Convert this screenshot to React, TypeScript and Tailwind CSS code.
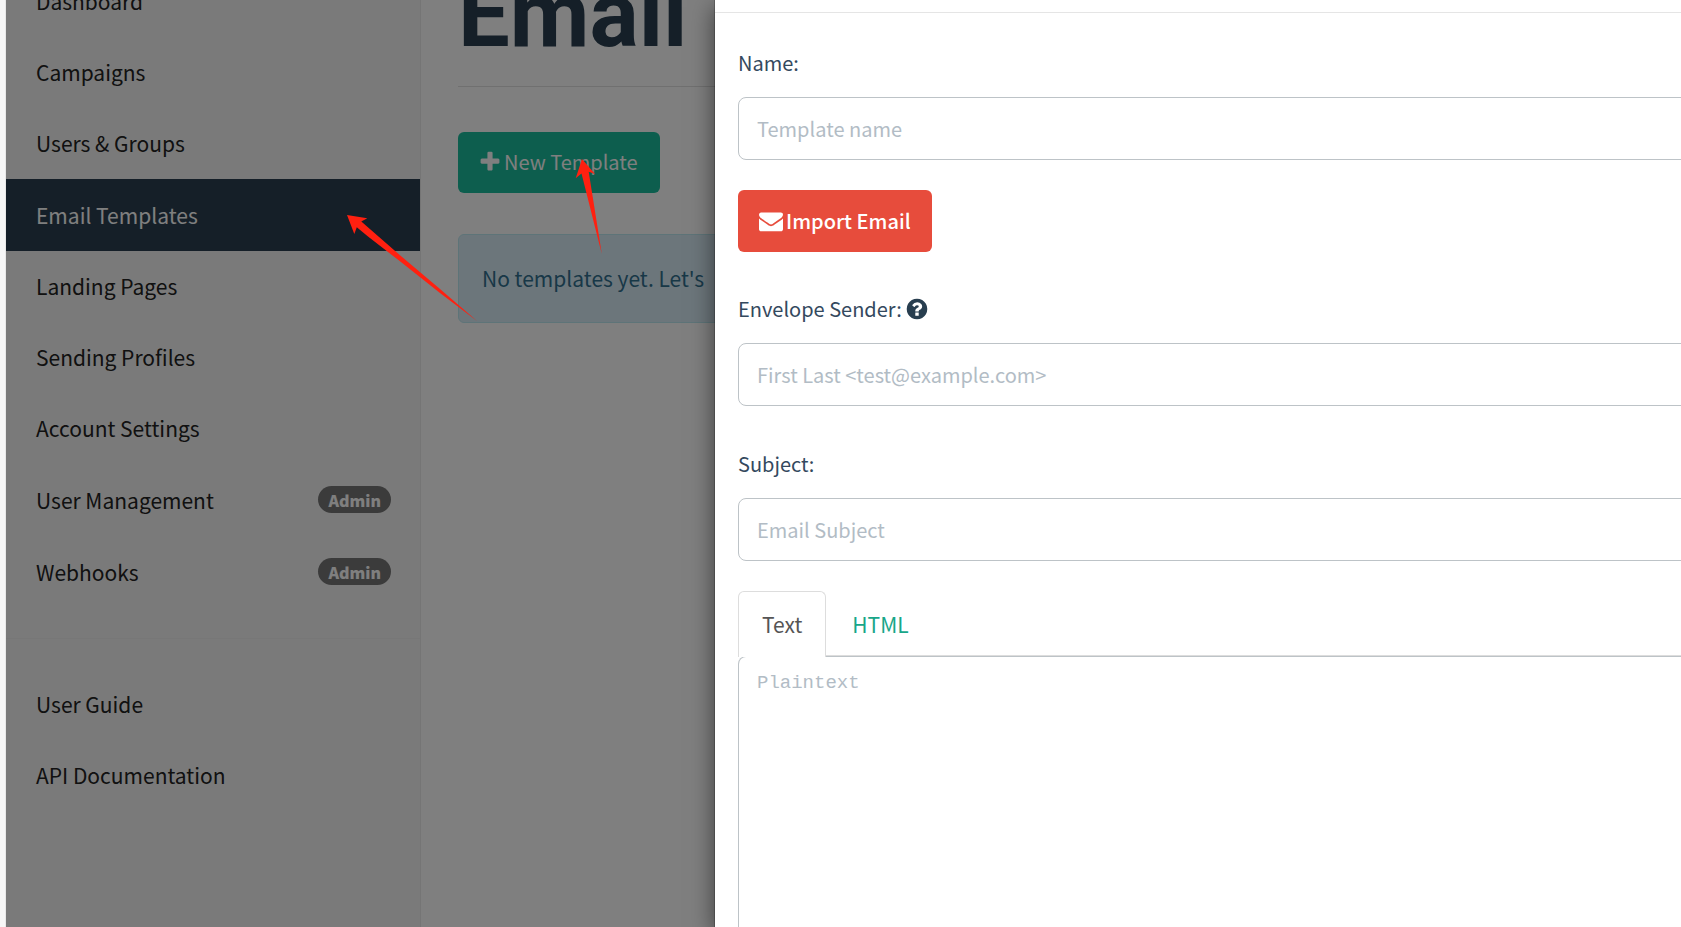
import { useState } from "react";

type NavItem = { label: string; admin?: boolean; active?: boolean };

const mainNav: NavItem[] = [
  { label: "Dashboard" },
  { label: "Campaigns" },
  { label: "Users & Groups" },
  { label: "Email Templates", active: true },
  { label: "Landing Pages" },
  { label: "Sending Profiles" },
  { label: "Account Settings" },
  { label: "User Management", admin: true },
  { label: "Webhooks", admin: true },
];

const helpNav: NavItem[] = [{ label: "User Guide" }, { label: "API Documentation" }];

const PLUS =
  "M1600 736v192q0 40-28 68t-68 28h-416v416q0 40-28 68t-68 28h-192q-40 0-68-28t-28-68v-416h-416q-40 0-68-28t-28-68v-192q0-40 28-68t68-28h416v-416q0-40 28-68t68-28h192q40 0 68 28t28 68v416h416q40 0 68 28t28 68z";
const ENVELOPE =
  "M1792 710v794q0 66-47 113t-113 47h-1472q-66 0-113-47t-47-113v-794q44 49 101 87 362 246 497 345 57 42 92.5 65.5t94.5 48 110 24.5h2q51 0 110-24.5t94.5-48 92.5-65.5q170-123 498-345 57-39 100-87zm0-294q0 79-49 151t-122 123q-376 261-468 325-10 7-42.5 31t-54 38.5-52 32.5-57.5 27-50 9h-2q-23 0-50-9t-57.5-27-52-32.5-54-38.5-42.5-31q-91-64-262-182.5t-205-142.5q-62-42-117-115.5t-55-136.5q0-78 41.5-130t118.5-52h1472q65 0 112.5 47t47.5 113z";
const QUESTION =
  "M1024 1376v-192q0-14-9-23t-23-9h-192q-14 0-23 9t-9 23v192q0 14 9 23t23 9h192q14 0 23-9t9-23zm256-672q0-88-55.5-163t-138.5-116-170-41q-243 0-371 213-15 24 8 42l132 100q7 6 19 6 16 0 25-12 53-68 86-92 34-24 86-24 48 0 85.5 26t37.5 59q0 38-20 61t-68 45q-63 28-115.5 86.5t-52.5 125.5v36q0 14 9 23t23 9h192q14 0 23-9t9-23q0-19 21.5-49.5t54.5-49.5q32-18 49-28.5t46-35 44.5-48 28-60.5 12.5-81zm384 192q0 209-103 385.5t-279.5 279.5-385.5 103-385.5-103-279.5-279.5-103-385.5 103-385.5 279.5-279.5 385.5-103 385.5 103 279.5 279.5 103 385.5z";

function Icon({ d, className }: { d: string; className: string }) {
  return (
    <svg viewBox="0 0 1792 1792" fill="currentColor" aria-hidden="true" className={className}>
      <path d={d} />
    </svg>
  );
}

function NavLink({ item }: { item: NavItem }) {
  const tone = item.active ? "bg-[#2a3f50] text-white" : "text-[#222222]";
  const height = item.active || item.admin ? "h-[72px]" : "h-[71px]";
  return (
    <li>
      <a href="#" className={`flex items-center justify-between pr-[29px] pb-px pl-[30px] ${height} ${tone}`}>
        {item.label}
        {item.admin && (
          <span className="flex h-[27px] items-center rounded-full bg-[#777777] px-[10px] text-[16px] leading-none font-black text-white">
            Admin
          </span>
        )}
      </a>
    </li>
  );
}

function Field({ id, label, placeholder, help }: { id: string; label: string; placeholder: string; help?: boolean }) {
  return (
    <div className="flex flex-col">
      <label htmlFor={id} className="flex h-8 items-center gap-[3px] text-[#34495e]">
        {label}
        {help && <Icon d={QUESTION} className="size-6 text-[#283e4f]" />}
      </label>
      <input
        id={id}
        type="text"
        placeholder={placeholder}
        className="mt-[18px] h-[63px] w-full rounded-lg border border-[#bdc3c7] bg-white px-[18px] text-[#34495e] outline-none placeholder:text-[#b2bcc5]"
      />
    </div>
  );
}

export default function App() {
  const [tab, setTab] = useState<"text" | "html">("text");
  const tabOn =
    "relative z-10 h-[66px] rounded-t-md border border-b-0 border-[#dddddd] bg-white px-[23px] pb-[2px] text-[#555555]";
  const tabOff = "h-[64px] rounded-t-md border border-b-0 border-transparent px-[23px] text-[#18a689]";

  return (
    <div className="relative flex h-screen overflow-hidden bg-white pl-[6px] font-['Noto_Sans_CJK_SC',sans-serif] text-[21px] leading-8">
      <div className="absolute inset-y-0 left-0 w-[6px] border-r border-[#e8e8e8] bg-[#f7f7f7]" />
      <nav className="w-[415px] shrink-0 border-r border-[#eaeaea] bg-[#f5f5f5]">
        <ul className="-mt-[34px]">
          {mainNav.map((item) => (
            <NavLink key={item.label} item={item} />
          ))}
        </ul>
        <hr className="my-[30px] border-[#eeeeee]" />
        <ul>
          {helpNav.map((item) => (
            <NavLink key={item.label} item={item} />
          ))}
        </ul>
      </nav>

      <main className="min-w-0 flex-1 px-[37px]">
        <h1 className="-mt-[34px] h-[121px] border-b border-[#e0e0e0] font-['Roboto',sans-serif] text-[92px] leading-[98px] font-bold text-[#2a3f50]">
          Email
        </h1>
        <button className="mt-[45px] flex h-[61px] items-center rounded-md bg-[#1abc9c] pr-[22px] pb-px pl-5 text-[20px] text-white">
          <Icon d={PLUS} className="mr-[2px] size-6" />
          New Template
        </button>
        <div className="mt-[41px] flex h-[89px] items-center rounded-md border border-[#bce8f1] bg-[#d9edf7] px-[23px] pb-px text-[#31708f]">
          No templates yet. Let's
        </div>
      </main>

      <div className="absolute inset-y-0 right-0 left-[6px] flex bg-black/50 pl-[708px]">
        <section
          role="dialog"
          aria-label="New Template"
          className="flex min-w-0 flex-1 flex-col border-l border-black/20 bg-white bg-clip-padding text-[20px] shadow-[0_7px_22px_rgba(0,0,0,0.5)]"
        >
          <div className="h-[13px] border-b border-[#e5e5e5]" />
          <form className="-mr-6 flex flex-1 flex-col pt-[34px] pl-[23px]">
            <Field id="name" label="Name:" placeholder="Template name" />
            <button
              type="button"
              className="mt-[30px] mb-[41px] flex h-[62px] items-center self-start rounded-md bg-[#e74c3c] pr-[21px] pb-px pl-[21px] font-medium text-white"
            >
              <Icon d={ENVELOPE} className="mr-[3px] size-6" />
              Import Email
            </button>
            <Field id="sender" label="Envelope Sender:" placeholder="First Last <test@example.com>" help />
            <div className="h-[42px]" />
            <Field id="subject" label="Subject:" placeholder="Email Subject" />
            <div
              role="tablist"
              className="mt-[30px] flex h-[65px] items-start gap-[2px] border-b border-[#dddddd] text-[21px]"
            >
              <button
                type="button"
                role="tab"
                aria-selected={tab === "text"}
                onClick={() => setTab("text")}
                className={tab === "text" ? tabOn : tabOff}
              >
                Text
              </button>
              <button
                type="button"
                role="tab"
                aria-selected={tab === "html"}
                onClick={() => setTab("html")}
                className={tab === "html" ? tabOn : tabOff}
              >
                HTML
              </button>
            </div>
            <textarea
              aria-label="Template body"
              placeholder="Plaintext"
              className="w-full flex-1 resize-none rounded-tl-lg border border-b-0 border-[#bdc3c7] px-[18px] pt-[10px] font-['Liberation_Mono',monospace] text-[19px] text-[#34495e] outline-none placeholder:text-[#b2bcc5]"
            />
          </form>
        </section>
      </div>

      <svg
        aria-hidden="true"
        viewBox="0 0 700 340"
        fill="#ff2010"
        className="pointer-events-none absolute top-0 left-0 h-[340px] w-[700px]"
      >
        <path d="M347 215L367.3 218.3L361.3 221.5L400 255.3L440 289L477 321L440 293L400 261.3L368 236.5L356.8 227.3L354.3 234Z" />
        <path d="M582 159L595 174L588.7 171.8L601.8 254L581.5 173.6L575.7 178.3Z" />
      </svg>
    </div>
  );
}
